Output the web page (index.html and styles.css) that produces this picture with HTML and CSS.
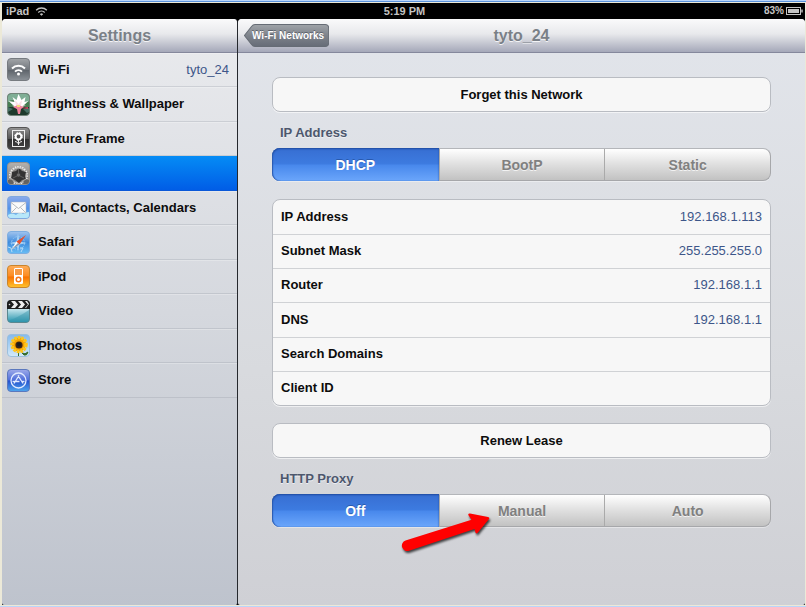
FILE: index.html
```html
<!DOCTYPE html>
<html lang="en">
<head>
<meta charset="utf-8">
<meta name="viewport" content="width=device-width, initial-scale=1">
<title>Settings</title>
<link rel="stylesheet" href="styles.css">
</head>
<body>
<div class="device">
  <header class="status">
    <div class="status-left">
      <span>iPad</span>
      <svg class="wifi" viewBox="0 0 14 12" aria-hidden="true"><g fill="none" stroke="#c4c4c4" stroke-width="1.5"><path d="M1.2 4.6a8.2 8.2 0 0 1 11.6 0"/><path d="M3.5 7a5 5 0 0 1 7 0"/></g><path d="M7 10.7 5.2 8.9a2.5 2.5 0 0 1 3.6 0z" fill="#c4c4c4"/></svg>
    </div>
    <span>5:19 PM</span>
    <div class="status-right">
      <span class="percent">83%</span>
      <svg class="battery" viewBox="0 0 17 8" aria-hidden="true"><rect x=".5" y=".5" width="14" height="7" fill="none" stroke="#c4c4c4"/><rect x="2" y="2" width="11" height="4" fill="#c4c4c4"/><path d="M16 2.5v3" stroke="#c4c4c4" stroke-width="1.4"/></svg>
    </div>
  </header>

  <div class="panes">
    <aside class="sidebar">
      <div class="bar"><h1 class="title">Settings</h1></div>
      <nav class="menu">
        <a class="item" href="#wifi">
          <svg class="icon" viewBox="0 0 23 23" aria-hidden="true">
            <defs>
              <linearGradient id="gray" x2="0" y2="1"><stop stop-color="#a2a5a8"/><stop offset=".5" stop-color="#73787e"/><stop offset=".52" stop-color="#5d636a"/><stop offset="1" stop-color="#8c9298"/></linearGradient>
            </defs>
            <rect x=".5" y=".5" width="22" height="22" rx="3.5" fill="url(#gray)" stroke="#777b80"/>
            <g fill="none" stroke="#fff" stroke-width="2"><path d="M5 10.5a9.2 9.2 0 0 1 13 0"/><path d="M8 13.6a5 5 0 0 1 7 0"/></g><circle cx="11.5" cy="16" r="1.5" fill="#fff"/>
          </svg>
          <span>Wi-Fi</span><span class="value">tyto_24</span>
        </a>
        <a class="item" href="#brightness">
          <svg class="icon" viewBox="0 0 23 23" aria-hidden="true">
            <rect x=".5" y=".5" width="22" height="22" rx="3.5" fill="#1e3a2c" stroke="#73857a"/>
            <path d="M1 3.5Q1 1 4 1h15q3 0 3 3v5H1z" fill="#7fae95"/>
            <path d="M1 9q5-4 10 0t11-1v6H1z" fill="#477d52"/>
            <path d="M1 14l5 2-5 3zM22 15l-6 1 4 4 2-1z" fill="#466f64"/>
            <path d="M11.500 17 1.500 8l6 1-2-5 4 3 2-6 3 6 4-3-1 5 4-1z" fill="#fff"/>
            <path d="M11.500 16 5 12.500l4 .5L8 7l3.500 4L15 7l-1 6 5-1z" fill="#fae0e6"/>
            <path d="M6 14l5-2 6 2-3 2-1 5h-2l-1-5z" fill="#f0839c"/>
            <path d="M10 12h3v2h-3z" fill="#f7dd7c"/><path d="M15 15l6-1v2z" fill="#cf3e5e"/>
          </svg>
          <span>Brightness &amp; Wallpaper</span>
        </a>
        <a class="item" href="#frame">
          <svg class="icon" viewBox="0 0 23 23" aria-hidden="true">
            <defs><linearGradient id="dark" x2="0" y2="1"><stop stop-color="#949494"/><stop offset=".5" stop-color="#555"/><stop offset=".52" stop-color="#303030"/><stop offset="1" stop-color="#444"/></linearGradient></defs>
            <rect x=".5" y=".5" width="22" height="22" rx="3.5" fill="url(#dark)" stroke="#555"/>
            <rect x="5.500" y="3.500" width="12" height="16" fill="none" stroke="#eee"/>
            <circle cx="11.500" cy="9.500" r="2.800" fill="#555" stroke="#fff" stroke-width="1.800"/>
            <circle cx="11.500" cy="9.500" r="3.900" fill="none" stroke="#fff" stroke-dasharray="1.700 1.400"/>
            <path d="M11.500 13v5M8 14.500q2.500 0 3.500 2.500 1-2.500 3.500-2.500" fill="none" stroke="#eee"/>
          </svg>
          <span>Picture Frame</span>
        </a>
        <a class="item selected" href="#general" aria-current="page">
          <svg class="icon" viewBox="0 0 23 23" aria-hidden="true">
            <defs><linearGradient id="metal" x2="0" y2="1"><stop stop-color="#b4b2af"/><stop offset="1" stop-color="#777675"/></linearGradient><clipPath id="tile"><rect x="1" y="1" width="21" height="21" rx="3"/></clipPath></defs>
            <rect x=".5" y=".5" width="22" height="22" rx="3.5" fill="url(#metal)" stroke="#93908c"/>
            <g clip-path="url(#tile)">
              <circle cx="11.500" cy="13.500" r="8.800" fill="none" stroke="#eee" stroke-width="1.500" stroke-dasharray="1.300 1.200"/>
              <circle cx="11.500" cy="13.500" r="7.800" fill="#8a8886" stroke="#d5d3d0"/>
              <path d="M5 10l4-1 2-2h2l2 2 4 1-1 4 1 3-4 1-3 3-4-3-4-2 1-3z" fill="#333"/>
              <circle cx="11.500" cy="13" r="1.800" fill="#6c6c6c"/>
              <path d="M11.500 7v4M6 16l4-2M17 16l-4-2" stroke="#5d5d5d"/>
              <circle cx="3" cy="21" r="4" fill="#646260" stroke="#d0ceca" stroke-dasharray="1 1"/>
              <circle cx="20" cy="21" r="4" fill="#646260" stroke="#d0ceca" stroke-dasharray="1 1"/>
            </g>
          </svg>
          <span>General</span>
        </a>
        <a class="item" href="#mail">
          <svg class="icon" viewBox="0 0 23 23" aria-hidden="true">
            <defs><linearGradient id="sky" x2="0" y2="1"><stop stop-color="#8caaea"/><stop offset=".55" stop-color="#5292ea"/><stop offset="1" stop-color="#7ccdf6"/></linearGradient></defs>
            <rect x=".5" y=".5" width="22" height="22" rx="3.5" fill="url(#sky)" stroke="#80a8df"/>
            <path d="M1 19q4-3 8 0 4-4 7-1 2-2 6-2v3q0 3-3 3H4q-3 0-3-3z" fill="#b7e7fa"/>
            <rect x="4" y="6" width="15" height="11" fill="#fafafa" stroke="#b5b5ba" stroke-width=".5"/>
            <path d="M4 6.500l7.500 6 7.500-6M4.500 16.500l5-5M18.500 16.500l-5-5" fill="none" stroke="#9a9fa6" stroke-width=".7"/>
          </svg>
          <span>Mail, Contacts, Calendars</span>
        </a>
        <a class="item" href="#safari">
          <svg class="icon" viewBox="0 0 23 23" aria-hidden="true">
            <defs><linearGradient id="sea" x2="0" y2="1"><stop stop-color="#a2c4ee"/><stop offset=".5" stop-color="#3d8bdd"/><stop offset="1" stop-color="#68bdf5"/></linearGradient></defs>
            <rect x=".5" y=".5" width="22" height="22" rx="3.5" fill="url(#sea)" stroke="#7eaee0"/>
            <circle cx="11" cy="12" r="6.500" fill="none" stroke="#8fc2f0" stroke-dasharray="2 1"/>
            <path d="M11 2l1.500 8.500L20 12l-7.500 1.500L11 21l-1.500-7.500L2 12l7.500-1.500z" fill="#a5d1f5"/>
            <path d="M13 17h3l-2 4M1 16l3 1 1 4" stroke="#b9def8" fill="none"/>
            <path d="M4 19l5.500-8.500 3 3z" fill="#fff"/><path d="M19 4l-6.500 9.500-3-3z" fill="#e7512d"/><path d="M4 19l7-7 1.500 1.500z" fill="#8795a8"/>
          </svg>
          <span>Safari</span>
        </a>
        <a class="item" href="#ipod">
          <svg class="icon" viewBox="0 0 23 23" aria-hidden="true">
            <defs><linearGradient id="orange" x2="0" y2="1"><stop stop-color="#ffad58"/><stop offset=".49" stop-color="#fc8b20"/><stop offset=".51" stop-color="#f96f00"/><stop offset="1" stop-color="#ffc52e"/></linearGradient></defs>
            <rect x=".5" y=".5" width="22" height="22" rx="3.5" fill="url(#orange)" stroke="#c9852d"/>
            <rect x="7.500" y="3.500" width="8" height="15" rx=".5" fill="#f69a45" stroke="#fff"/>
            <path d="M7.500 10h8v8.500h-8z" fill="#fff"/><circle cx="11.500" cy="14.500" r="2.300" fill="none" stroke="#f57619" stroke-width="1.500"/>
          </svg>
          <span>iPod</span>
        </a>
        <a class="item" href="#video">
          <svg class="icon" viewBox="0 0 23 23" aria-hidden="true">
            <defs><linearGradient id="teal" x2="0" y2="1"><stop stop-color="#d2edf3"/><stop offset=".4" stop-color="#c4e5ed"/><stop offset=".7" stop-color="#72bbcb"/><stop offset="1" stop-color="#2292ad"/></linearGradient></defs>
            <rect x=".5" y=".5" width="22" height="22" rx="3.5" fill="url(#teal)" stroke="#5b8790"/>
            <path d="M1 21q9-3 21-11v9q0 3-3 3H3z" fill="#3895aa" opacity=".45"/>
            <path d="M0 4q0-4 4-4h15q4 0 4 4v5H0z" fill="#1e1e1e"/>
            <path d="M4 1h4l3 3.500L8 8H4l3-3.500zM11 1h4l3 3.500L15 8h-4l3-3.500zM18 1h2l2 3-3 4h-1l3-3.500z" fill="#eee"/><circle cx="2.500" cy="4.500" r=".8" fill="#ddd"/>
          </svg>
          <span>Video</span>
        </a>
        <a class="item" href="#photos">
          <svg class="icon" viewBox="0 0 23 23" aria-hidden="true">
            <defs><linearGradient id="day" x2="0" y2="1"><stop stop-color="#82b9ef"/><stop offset="1" stop-color="#d3eafa"/></linearGradient></defs>
            <rect x=".5" y=".5" width="22" height="22" rx="3.5" fill="url(#day)" stroke="#9bbfdc"/>
            <path d="M11.500 15v7M15 19q3 2 6-1-1 4-4 3z" fill="#356c2c" stroke="#356c2c"/>
            <circle cx="12" cy="10.500" r="7" fill="#f5a300"/><circle cx="12" cy="10.500" r="7" fill="none" stroke="#ffc51a" stroke-width="3.500" stroke-dasharray="2.600 .9"/>
            <circle cx="12" cy="11" r="3.600" fill="#3a2415"/><circle cx="12" cy="10.500" r="2" fill="#171d25"/>
          </svg>
          <span>Photos</span>
        </a>
        <a class="item" href="#store">
          <svg class="icon" viewBox="0 0 23 23" aria-hidden="true">
            <defs><linearGradient id="blue" x2="0" y2="1"><stop stop-color="#9eaae9"/><stop offset=".49" stop-color="#4d6edb"/><stop offset=".51" stop-color="#2450cd"/><stop offset="1" stop-color="#4ea6ed"/></linearGradient></defs>
            <rect x=".5" y=".5" width="22" height="22" rx="3.5" fill="url(#blue)" stroke="#5b78bd"/>
            <circle cx="11.500" cy="11.500" r="7.500" fill="none" stroke="#e1eaff" stroke-width="1.300"/>
            <path d="M7 14.500l5-8M11 6.500l5 8M5.500 12.500h7M14.500 12.500h3" fill="none" stroke="#e1eaff" stroke-width="1.300"/>
          </svg>
          <span>Store</span>
        </a>
      </nav>
    </aside>

    <main class="detail">
      <div class="bar bar-detail">
        <button class="back" type="button">
          <svg class="back-shape" viewBox="0 0 85 23" preserveAspectRatio="none" aria-hidden="true">
            <defs><linearGradient id="back" x2="0" y2="1"><stop stop-color="#a0a4a9"/><stop offset=".5" stop-color="#7e838b"/><stop offset="1" stop-color="#666c77"/></linearGradient></defs>
            <path d="M11 .5h70q3.500 0 3.500 3.500v15q0 3.500-3.500 3.500H11q-2 0-3.500-2L.5 11.500l7-9q1.500-2 3.500-2z" fill="url(#back)" stroke="#666c75"/>
          </svg>
          <span class="back-text">Wi-Fi Networks</span>
        </button>
        <h2 class="title">tyto_24</h2>
      </div>

      <div class="content">
        <button class="card action" type="button">Forget this Network</button>

        <fieldset class="group">
          <legend class="group-label">IP Address</legend>
          <div class="segmented">
            <label class="segment"><input type="radio" name="ip" checked><span>DHCP</span></label>
            <label class="segment"><input type="radio" name="ip"><span>BootP</span></label>
            <label class="segment"><input type="radio" name="ip"><span>Static</span></label>
          </div>
        </fieldset>

        <div class="card">
          <table class="info">
            <tr><th scope="row">IP Address</th><td>192.168.1.113</td></tr>
            <tr><th scope="row">Subnet Mask</th><td>255.255.255.0</td></tr>
            <tr><th scope="row">Router</th><td>192.168.1.1</td></tr>
            <tr><th scope="row">DNS</th><td>192.168.1.1</td></tr>
            <tr><th scope="row">Search Domains</th><td></td></tr>
            <tr><th scope="row">Client ID</th><td></td></tr>
          </table>
        </div>

        <button class="card action" type="button">Renew Lease</button>

        <fieldset class="group">
          <legend class="group-label">HTTP Proxy</legend>
          <div class="segmented">
            <label class="segment"><input type="radio" name="proxy" checked><span>Off</span></label>
            <label class="segment"><input type="radio" name="proxy"><span>Manual</span></label>
            <label class="segment"><input type="radio" name="proxy"><span>Auto</span></label>
            <svg class="pointer" viewBox="0 0 90 40" aria-hidden="true">
              <path d="M3.500 27.500 69.500 6.800 66.300 2Q66 .3 68 .5L86 4q2 .4 1 2L75.500 20q-1.500 1-2-.5L72.500 16 7 37.700A5.300 5.300 0 0 1 3.500 27.500z" fill="#f00"/>
            </svg>
          </div>
        </fieldset>
      </div>
    </main>
  </div>
</div>
</body>
</html>
```
FILE: styles.css
```css
* { box-sizing: border-box; }

body {
  margin: 0;
  background: #ece9d8;
  font-family: "Liberation Sans", Arial, Helvetica, sans-serif;
  font-size: 13px;
  font-weight: bold;
  line-height: 16px;
  color: #0c0c0c;
}

.device {
  display: flex;
  flex-direction: column;
  min-height: 100vh;
  padding: 1px 1px 1px 2px;
  border-top: 1px solid #b9d5fa;
  border-bottom: 1px solid #b9d5fa;
  box-shadow: inset 0 1px #5a92dc;
}

.status {
  display: grid;
  grid-template-columns: 1fr auto 1fr;
  align-items: center;
  height: 16px;
  margin-top: 1px;
  padding: 0 2px 0 4px;
  background: #000;
  color: #c4c4c4;
  font-size: 11px;
}

.status-left,
.status-right { display: flex; align-items: center; gap: 6px; }
.status-right { justify-content: flex-end; gap: 2px; }
.percent { font-size: 10px; }
.wifi { width: 13px; height: 11px; }
.battery { width: 17px; height: 8px; }

.panes {
  flex: 1;
  display: grid;
  grid-template-columns: 236px 1fr;
  background: #000;
}

.sidebar {
  border-right: 1px solid #25282d;
  border-radius: 4px 4px 2px 2px;
  background: linear-gradient(#eaebee, #d5d8de 50%, #bec3cd);
}

.detail {
  border-radius: 4px 4px 2px 2px;
  background: linear-gradient(#e2e5eb, #d8dade 60%, #cfd0d5);
}

.bar {
  display: grid;
  align-items: center;
  justify-items: center;
  height: 34px;
  border-bottom: 1px solid #85889c;
  border-radius: 4px 4px 0 0;
  background: linear-gradient(#fafafb, #e8e9ec 45%, #a5a8b9);
}

.bar-detail { grid-template-columns: 1fr auto 1fr; }

.title {
  margin: 0;
  color: #7a8087;
  font-size: 16px;
  line-height: 20px;
  text-shadow: 0 1px #f4f4f6;
}

.back {
  position: relative;
  justify-self: start;
  height: 23px;
  margin-left: 6px;
  padding: 0 5px 0 8px;
  border: 0;
  background: none;
  color: #fff;
  font: bold 10px/16px "Liberation Sans", Arial, sans-serif;
  text-shadow: 0 -1px #5c626b;
}

.back-shape { position: absolute; inset: 0; width: 100%; height: 100%; }
.back-text { position: relative; }

.item {
  display: flex;
  align-items: center;
  gap: 8px;
  height: 34px;
  padding: 0 8px 0 5px;
  border-bottom: 1px solid rgba(150, 155, 165, .3);
  box-shadow: inset 0 1px rgba(255, 255, 255, .25);
  color: inherit;
  text-decoration: none;
}

.item:nth-child(even) { height: 35px; }

.item.selected {
  border-bottom-color: #0a58d8;
  background: linear-gradient(#058cf5, #015de6);
  box-shadow: none;
  color: #fff;
  text-shadow: 0 -1px #1460c0;
}

.icon { flex: none; width: 23px; height: 23px; }

.value {
  margin-left: auto;
  color: #3d5689;
  font-weight: normal;
}

.content {
  display: flex;
  flex-direction: column;
  padding: 24px 34px 40px;
}

.card {
  overflow: hidden;
  border: 1px solid #b9bcc2;
  border-radius: 8px;
  background: #f7f7f7;
  box-shadow: 0 1px rgba(255, 255, 255, .6);
}

.action {
  height: 35px;
  padding: 0;
  color: inherit;
  font: inherit;
}

.group { min-width: 0; margin: 0 0 18px; padding: 0; border: 0; }

.group-label {
  padding: 13px 8px 7px;
  color: #4d576d;
  text-shadow: 0 1px #edeff3;
}

.segmented {
  position: relative;
  display: grid;
  grid-template-columns: repeat(3, 1fr);
  height: 33px;
  border: 1px solid #a6a7aa;
  border-top-color: #b4b6ba;
  border-radius: 8px;
  background: linear-gradient(#fff, #e2e2e2 45%, #c2c2c2);
  box-shadow: 0 1px rgba(255, 255, 255, .4);
}

.segment {
  display: grid;
  place-items: center;
  color: #808080;
  font-size: 14px;
  text-shadow: 0 1px #f2f2f2;
}

.segment + .segment { border-left: 1px solid #aaa; }
.segment input { position: absolute; opacity: 0; }

.segment:has(:checked) {
  margin: -1px 0 -1px -1px;
  border-radius: 8px 0 0 8px;
  background: linear-gradient(#376ed2, #3d7be0 48%, #4888ec 52%, #6ba6fb);
  box-shadow: inset 0 1px 2px #1d4a9f, inset 1px 0 1px #3162b8;
  color: #fff;
  text-shadow: 0 -1px #2a5aae;
}

.pointer {
  position: absolute;
  top: 18px;
  left: 26%;
  width: 90px;
  height: 40px;
  overflow: visible;
  filter: drop-shadow(1px 2px 1px rgba(0, 0, 0, .7));
  pointer-events: none;
}

.info { width: 100%; border-collapse: collapse; }
.info tr { height: 34px; }
.info tr:nth-child(4n) { height: 35px; }
.info tr + tr { border-top: 1px solid #d0d2d5; }
.info th { padding: 0 8px; text-align: left; }

.info td {
  padding: 0 8px;
  color: #3d5689;
  font-weight: normal;
  text-align: right;
}

.card:has(.info) { margin-bottom: 17px; }
```
